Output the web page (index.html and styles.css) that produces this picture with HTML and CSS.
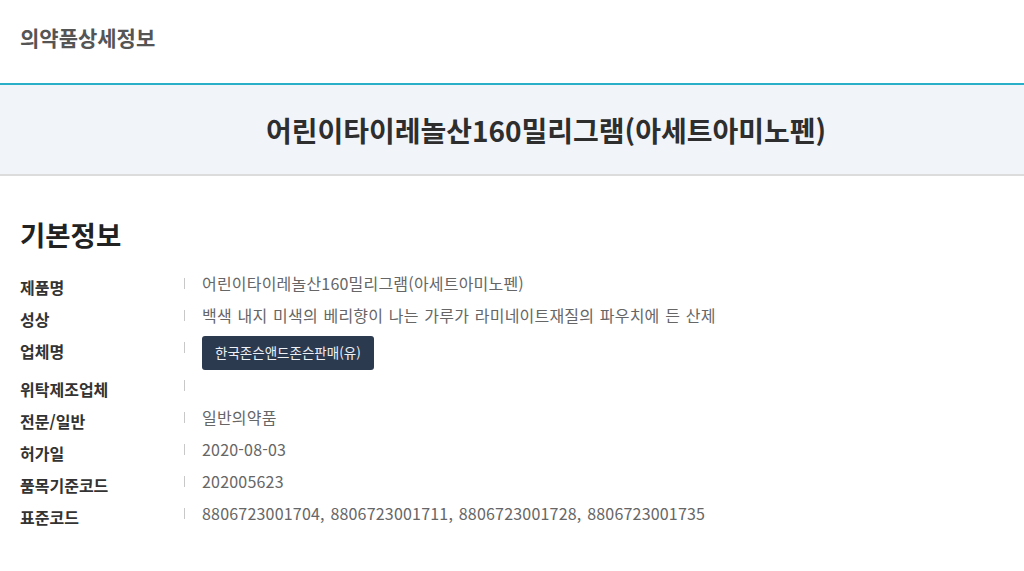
FILE: index.html
```html
<!DOCTYPE html>
<html lang="ko">
<head>
<meta charset="utf-8">
<title>의약품상세정보</title>
<link rel="stylesheet" href="styles.css">
</head>
<body>
<header class="top">
  <h1 class="top-title">의약품상세정보</h1>
</header>
<div class="banner">
  <h2 class="banner-title">어린이타이레놀산160밀리그램(아세트아미노펜)</h2>
</div>
<section class="info">
  <h3 class="info-title">기본정보</h3>
  <dl class="rows">
    <div class="row"><dt class="label">제품명</dt><dd class="value">어린이타이레놀산160밀리그램(아세트아미노펜)</dd></div>
    <div class="row"><dt class="label">성상</dt><dd class="value">백색 내지 미색의 베리향이 나는 가루가 라미네이트재질의 파우치에 든 산제</dd></div>
    <div class="row"><dt class="label">업체명</dt><dd class="value"><a class="company" href="#">한국존슨앤드존슨판매(유)</a></dd></div>
    <div class="row"><dt class="label">위탁제조업체</dt><dd class="value"></dd></div>
    <div class="row"><dt class="label">전문/일반</dt><dd class="value">일반의약품</dd></div>
    <div class="row"><dt class="label">허가일</dt><dd class="value">2020-08-03</dd></div>
    <div class="row"><dt class="label">품목기준코드</dt><dd class="value">202005623</dd></div>
    <div class="row"><dt class="label">표준코드</dt><dd class="value">8806723001704, 8806723001711, 8806723001728, 8806723001735</dd></div>
  </dl>
</section>
</body>
</html>
```
FILE: styles.css
```css
* { box-sizing: border-box; }
html, body { margin: 0; padding: 0; background: #fff; }
body {
  font-family: "Noto Sans CJK KR", "Noto Sans", sans-serif;
  color: #333;
}
.top {
  height: 85px;
  padding-left: 20px;
  display: flex;
  align-items: center;
  border-bottom: 2px solid #2aafc8;
}
.top-title {
  margin: 0;
  font-size: 21px;
  font-weight: 700;
  color: #555;
  position: relative;
  top: -5px;
}
.banner {
  height: 91px;
  padding-left: 68px;
  background: #f1f4f9;
  border-bottom: 2px solid #dcdcdc;
  display: flex;
  align-items: center;
  justify-content: center;
}
.banner-title {
  margin: 0;
  font-size: 28px;
  font-weight: 700;
  color: #2e2e2e;
}
.info {
  padding: 0 20px;
}
.info-title {
  margin: 0;
  padding-top: 38px;
  height: 96px;
  font-size: 27.5px;
  line-height: 40px;
  font-weight: 700;
  color: #222;
}
.rows {
  margin: 0;
  display: flex;
  flex-direction: column;
  gap: 4px;
}
.row {
  display: flex;
  align-items: flex-start;
  min-height: 28px;
}
.label {
  width: 164px;
  flex: none;
  padding-top: 2px;
  font-size: 16px;
  font-weight: 700;
  line-height: 26px;
  color: #333;
}
.value {
  margin: 0;
  position: relative;
  padding-left: 18px;
  font-size: 16px;
  line-height: 22px;
  letter-spacing: 0.2px;
  word-spacing: 1px;
  color: #666;
}
.value::before {
  content: "";
  position: absolute;
  left: 0;
  top: 6px;
  width: 1px;
  height: 11px;
  background: #c8c8c8;
}
.company {
  display: inline-block;
  height: 34px;
  padding: 0 13px;
  line-height: 33px;
  background: #2c3a50;
  color: #eef1f5;
  border-radius: 3px;
  font-size: 13.5px;
  letter-spacing: 0;
  word-spacing: 0;
  text-decoration: none;
}
```
